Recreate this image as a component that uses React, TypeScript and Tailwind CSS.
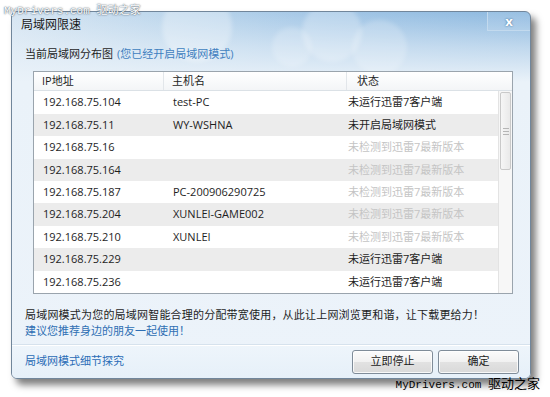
const rows = [
  { ip: "192.168.75.104", host: "test-PC", status: "未运行迅雷7客户端", dim: false },
  { ip: "192.168.75.11", host: "WY-WSHNA", status: "未开启局域网模式", dim: false },
  { ip: "192.168.75.16", host: "", status: "未检测到迅雷7最新版本", dim: true },
  { ip: "192.168.75.164", host: "", status: "未检测到迅雷7最新版本", dim: true },
  { ip: "192.168.75.187", host: "PC-200906290725", status: "未检测到迅雷7最新版本", dim: true },
  { ip: "192.168.75.204", host: "XUNLEI-GAME002", status: "未检测到迅雷7最新版本", dim: true },
  { ip: "192.168.75.210", host: "XUNLEI", status: "未检测到迅雷7最新版本", dim: true },
  { ip: "192.168.75.229", host: "", status: "未运行迅雷7客户端", dim: false },
  { ip: "192.168.75.236", host: "", status: "未运行迅雷7客户端", dim: false },
];

function Button({ label }: { label: string }) {
  return (
    <button className="w-[81px] h-[24px] rounded-[3px] border border-[#7f8c99] bg-[linear-gradient(180deg,#fbfbfb_0%,#f1f1f1_50%,#e2e2e2_51%,#d9d9d9_100%)] text-[11px] text-[#1b1b1b] shadow-[inset_0_0_0_1px_rgba(255,255,255,0.8)]">
      {label}
    </button>
  );
}

export default function App() {
  return (
    <div className="relative w-[550px] h-[397px] overflow-hidden bg-white font-['Open_Sans','Noto_Sans_CJK_SC',sans-serif] text-[#1e1e1e]">
      <div className="pl-[11px] pt-[11px]">
        <div className="relative w-[520px] h-[368px] rounded-[6px] border border-[#71869b] overflow-hidden shadow-[5px_6px_7px_rgba(0,0,0,0.5)] bg-[linear-gradient(180deg,rgba(234,242,249,0)_0%,rgba(234,242,249,0.55)_35px,#eaf2f9_70px,#ecf3fa_100%),linear-gradient(90deg,#d6e5f2_0%,#bcd6ec_30%,#a2c6e6_60%,#8cb8df_100%)]">
          {/* bokeh */}
          <div className="absolute left-[150px] top-[-20px] w-[70px] h-[70px] rounded-full bg-white/30 blur-[2px]" />
          <div className="absolute left-[290px] top-[-10px] w-[60px] h-[60px] rounded-full bg-white/25 blur-[2px]" />
          <div className="absolute left-[340px] top-[8px] w-[55px] h-[55px] rounded-full bg-white/20 blur-[2px]" />
          <div className="absolute left-[260px] top-[15px] w-[40px] h-[40px] rounded-full bg-white/20 blur-[2px]" />

          {/* close */}
          <div className="absolute right-0 top-0 w-[43px] h-[19px] rounded-tr-[5px] border-l border-b border-[#c3daee] bg-white/10 flex items-center justify-center text-[13px] font-bold leading-none text-white [text-shadow:0_0_2px_#2f5f8c]">
            x
          </div>

          <div className="relative flex flex-col">
            <div className="h-[26px] pl-[9px] flex items-center text-[12px] text-[#1a1a1a]">局域网限速</div>
            <div className="h-[33px] pl-[13px] flex items-center text-[11px]">
              <span className="text-[#1e1e1e]">当前局域网分布图</span>
              <span className="ml-[4px] text-[#3f7fbf]">(您已经开启局域网模式)</span>
            </div>

            <div className="ml-[21px] w-[480px] h-[223px] border border-[#9aa4ad] bg-white flex flex-col">
              <div className="h-[20px] flex text-[11px] bg-[linear-gradient(180deg,#ffffff,#f3f5f7)] border-b border-[#dbe1e6]">
                <div className="w-[130px] pl-[8px] flex items-center border-r border-[#e2e6ea]">IP地址</div>
                <div className="w-[183px] pl-[8px] flex items-center border-r border-[#e2e6ea]">主机名</div>
                <div className="flex-1 pl-[10px] flex items-center">状态</div>
              </div>
              <div className="flex flex-1">
                <div className="flex-1 flex flex-col text-[11px]">
                  {rows.map((r, i) => (
                    <div key={r.ip} className={`h-[22.4px] flex items-center ${i % 2 === 1 ? "bg-[#ececec]" : "bg-white"}`}>
                      <div className="w-[130px] pl-[9px]">{r.ip}</div>
                      <div className="w-[183px] pl-[9px]">{r.host}</div>
                      <div className={`flex-1 pl-[1px] ${r.dim ? "text-[#c4c4c4]" : "text-[#1e1e1e]"}`}>{r.status}</div>
                    </div>
                  ))}
                </div>
                <div className="w-[14px] border-l border-[#e3e3e3] bg-[#f7f7f7] pt-[1px] px-[1px]">
                  <div className="h-[78px] rounded-[2px] border border-[#c9c9c9] bg-[linear-gradient(90deg,#f6f6f6,#e9e9e9)] flex flex-col items-center justify-center gap-[2px]">
                    <div className="w-[6px] h-px bg-[#b5b5b5]" />
                    <div className="w-[6px] h-px bg-[#b5b5b5]" />
                    <div className="w-[6px] h-px bg-[#b5b5b5]" />
                  </div>
                </div>
              </div>
            </div>

            <div className="pl-[13px] pt-[13px] text-[11px] leading-[16px]">
              <div className="text-[#1e1e1e] tracking-[0.2px]">局域网模式为您的局域网智能合理的分配带宽使用，从此让上网浏览更和谐，让下载更给力！</div>
              <div className="text-[#2f6fb3]">建议您推荐身边的朋友一起使用！</div>
            </div>

            <div className="mt-[5px] h-[34px] border-t border-[#d6e2ed] shadow-[inset_0_1px_0_#ffffff] bg-[linear-gradient(180deg,#eef5fb,#e6f0f9)] flex items-center pl-[13px] pr-[11px]">
              <span className="text-[11px] text-[#2a6cb6]">局域网模式细节探究</span>
              <div className="ml-auto flex gap-[5px]">
                <Button label="立即停止" />
                <Button label="确定" />
              </div>
            </div>
          </div>
        </div>
      </div>

      {/* watermarks */}
      <div className="absolute left-[4px] top-[3px] text-[11px] font-['Liberation_Mono','Noto_Sans_CJK_SC',monospace] text-white [text-shadow:0_0_2px_#5a6a78,0_0_1px_#5a6a78]">
        MyDrivers.com 驱动之家
      </div>
      <div className="absolute right-[10px] top-[375px] text-[11px] font-['Liberation_Mono','Noto_Sans_CJK_SC',monospace] text-black">
        MyDrivers.com <span className="text-[13px]">驱动之家</span>
      </div>
    </div>
  );
}
